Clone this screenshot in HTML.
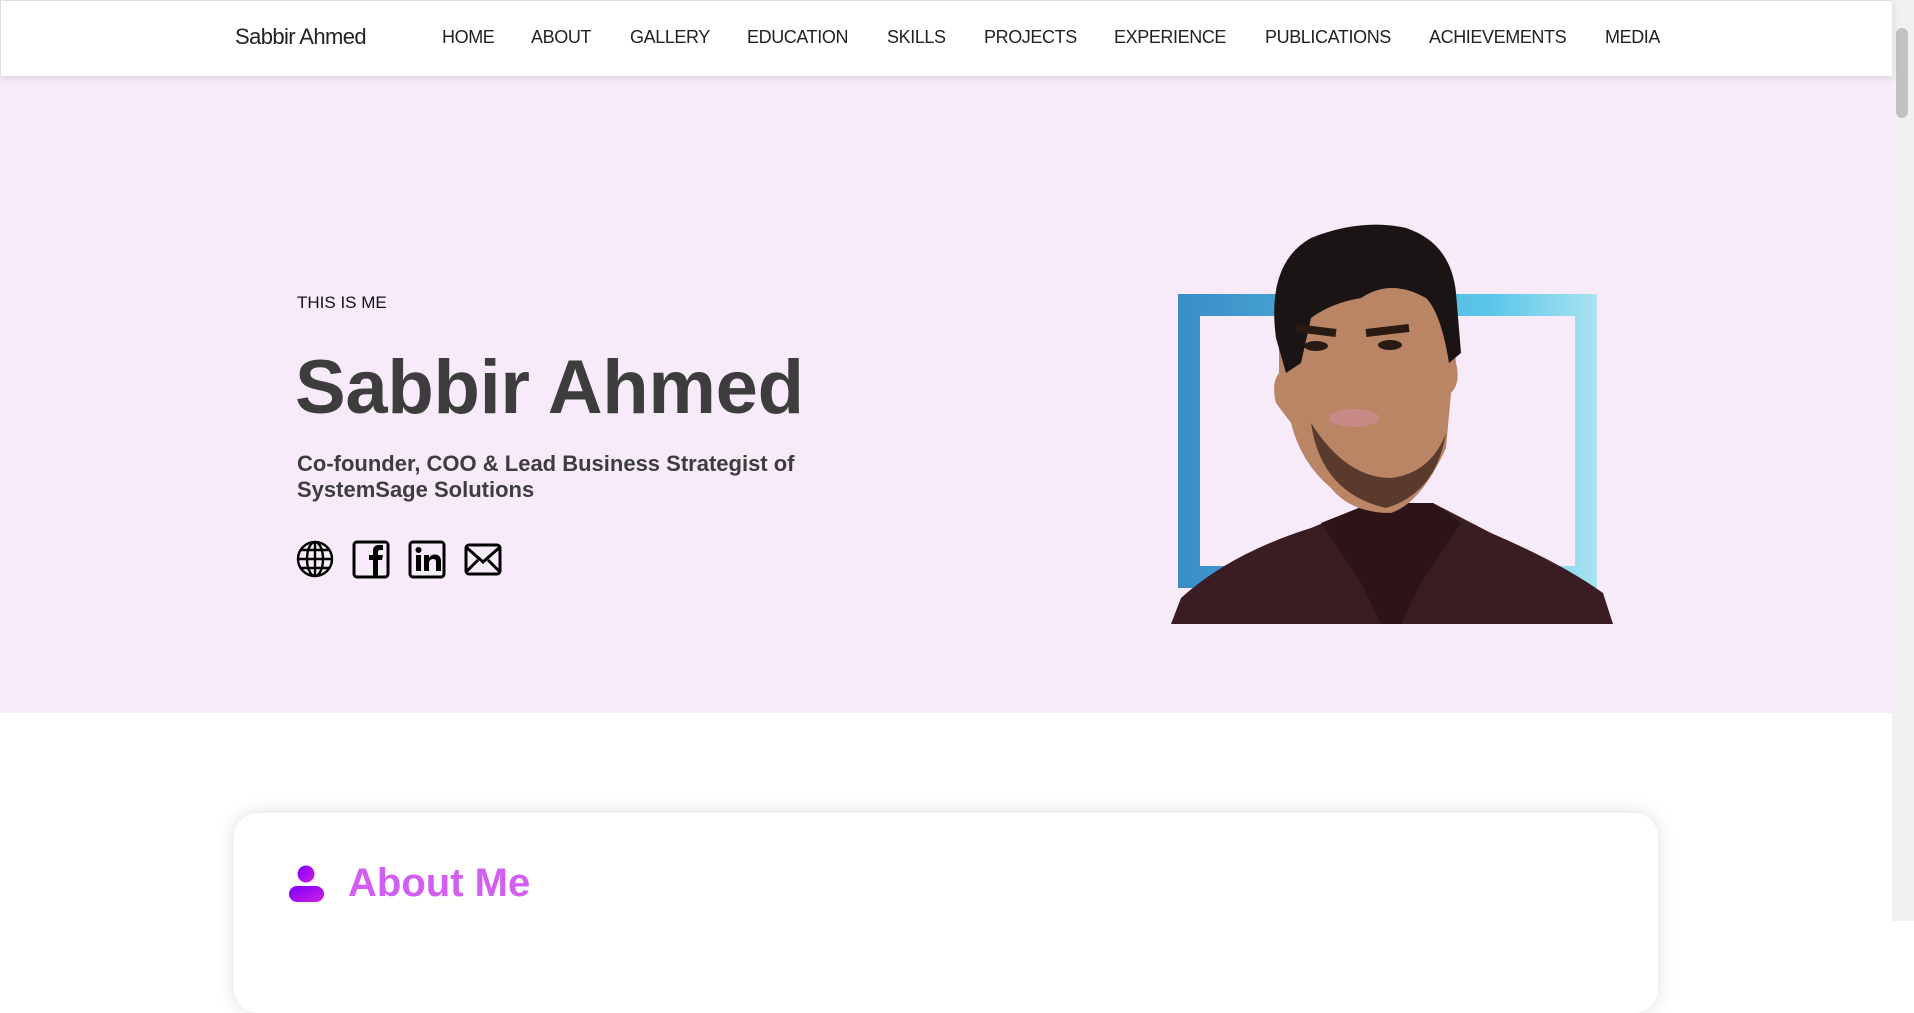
<!DOCTYPE html>
<html><head><meta charset="utf-8"><style>
*{margin:0;padding:0;box-sizing:border-box}
body{width:1914px;height:921px;overflow:hidden;background:#fff;font-family:"Liberation Sans",Arial,sans-serif;position:relative}
.nav{position:absolute;left:0;top:0;width:1892px;height:76px;background:#fff;box-shadow:0 2px 8px rgba(0,0,0,.12);z-index:5;border-top:1px solid #ddd;border-left:1px solid #ddd}
.nav span{position:absolute;top:26px;font-size:18px;color:#222;letter-spacing:-0.4px;white-space:nowrap}
.logo{font-size:22px!important;top:23px!important;letter-spacing:-0.6px!important}
.hero{position:absolute;left:0;top:76px;width:1892px;height:637px;background:#f7ebfa}
.abs{position:absolute}
.card{position:absolute;left:234px;top:813px;width:1424px;height:200px;background:#fff;border-radius:24px;box-shadow:0 0 18px rgba(0,0,0,.13)}
.sb{position:absolute;right:0;top:0;width:22px;height:921px;background:#f1f1f1}
</style></head><body>
<div class="nav">
<span class="logo" style="left:234px">Sabbir Ahmed</span>
<span style="left:441px">HOME</span>
<span style="left:530px">ABOUT</span>
<span style="left:629px">GALLERY</span>
<span style="left:746px">EDUCATION</span>
<span style="left:886px">SKILLS</span>
<span style="left:983px">PROJECTS</span>
<span style="left:1113px">EXPERIENCE</span>
<span style="left:1264px">PUBLICATIONS</span>
<span style="left:1428px">ACHIEVEMENTS</span>
<span style="left:1604px">MEDIA</span>
</div>
<div class="hero"></div>
<div class="abs" style="left:297px;top:293px;font-size:17px;color:#111">THIS IS ME</div>
<div class="abs" style="left:295px;top:338px;font-size:76px;font-weight:bold;color:#3d3d3d;letter-spacing:-0.3px;line-height:100px">Sabbir Ahmed</div>
<div class="abs" style="left:297px;top:451px;font-size:22px;font-weight:bold;color:#3d3d3d;line-height:26px">Co-founder, COO &amp; Lead Business Strategist of<br>SystemSage Solutions</div>
<svg class="abs" style="left:296px;top:540px" width="40" height="40" viewBox="0 0 40 40" fill="none" stroke="#000" stroke-width="2.4">
<circle cx="19" cy="19" r="17"/><ellipse cx="19" cy="19" rx="8" ry="17"/><line x1="19" y1="2" x2="19" y2="36"/><line x1="2" y1="19" x2="36" y2="19"/><path d="M5 10h28M5 28h28"/></svg>
<svg class="abs" style="left:352px;top:540px" width="40" height="40" viewBox="0 0 40 40">
<rect x="2" y="2" width="34" height="35" rx="3" fill="none" stroke="#000" stroke-width="3"/>
<path d="M21 37V20h-4v-5h4v-4c0-4 2-6 6-6h4v5h-3c-1 0-2 1-2 2v3h5l-1 5h-4v17z" fill="#000"/></svg>
<svg class="abs" style="left:408px;top:540px" width="40" height="40" viewBox="0 0 40 40">
<rect x="2" y="2" width="34" height="35" rx="3" fill="none" stroke="#000" stroke-width="3"/>
<rect x="8" y="15" width="5" height="16"/><circle cx="10.5" cy="10" r="3"/>
<path d="M16 15h5v3c1-2 3-3.5 6-3.5 4 0 6 2.5 6 7V31h-5v-9c0-2-1-3-3-3s-4 1.5-4 4v8h-5z"/></svg>
<svg class="abs" style="left:464px;top:542px" width="40" height="36" viewBox="0 0 40 36" fill="none" stroke="#000" stroke-width="3">
<rect x="2" y="3" width="34" height="29" rx="3"/><path d="M2 5l17 15L36 5M2 30l12-12M36 30L24 18"/></svg>
<div class="abs" style="left:1178px;top:294px;width:419px;height:294px;background:linear-gradient(90deg,#3a8dc6,#5cc6ea 75%,#a9e3f0);"></div>
<div class="abs" style="left:1200px;top:316px;width:375px;height:250px;background:#f7ebfa"></div>
<svg class="abs" style="left:1171px;top:223px" width="442" height="401" viewBox="0 0 442 401">
<path d="M0 401 L10 375 Q60 330 140 305 L200 280 L262 280 L320 310 Q390 340 432 370 L442 401Z" fill="#3a1d22"/>
<path d="M150 300 L190 360 L210 401 L230 401 L250 360 L290 300 L262 280 L200 280Z" fill="#2c1418"/>
<path d="M108 120 Q100 60 135 25 Q180 0 225 12 Q270 30 280 80 L285 140 Q290 160 280 170 L275 225 Q250 280 220 290 Q180 290 160 265 Q130 240 120 200 L105 180 Q100 160 108 150Z" fill="#b98565"/>
<path d="M140 200 Q150 270 215 285 Q265 270 275 210 Q260 250 220 255 Q175 255 140 200Z" fill="#5a3a2c"/>
<path d="M105 115 Q95 40 140 15 Q190 -5 235 5 Q280 20 285 70 L290 130 L278 140 Q270 90 255 75 Q220 55 190 75 Q160 80 140 95 L130 140 L115 150Z" fill="#1a1414"/>
<ellipse cx="145" cy="123" rx="12" ry="5" fill="#2a1a14"/><ellipse cx="219" cy="122" rx="12" ry="5" fill="#2a1a14"/>
<path d="M125 105 L165 110 M195 110 L238 105" stroke="#2a1a14" stroke-width="8"/>
<ellipse cx="183" cy="195" rx="25" ry="9" fill="#c98a85"/>
</svg>
<div class="card">
<svg class="abs" style="left:54px;top:50px" width="37" height="40" viewBox="0 0 37 40">
<defs><linearGradient id="g" x1="0" y1="0" x2="1" y2="1"><stop offset="0" stop-color="#7a00ff"/><stop offset="1" stop-color="#d21ee0"/></linearGradient></defs>
<circle cx="18" cy="11" r="8.5" fill="url(#g)"/><rect x="1" y="23" width="35" height="16" rx="8" fill="url(#g)"/></svg>
<div class="abs" style="left:114px;top:48px;font-size:40px;font-weight:bold;color:#d25ef2">About Me</div>
</div>
<div class="sb"><div style="position:absolute;left:4px;top:28px;width:12px;height:90px;background:#c1c1c1;border-radius:6px"></div></div>
</body></html>
